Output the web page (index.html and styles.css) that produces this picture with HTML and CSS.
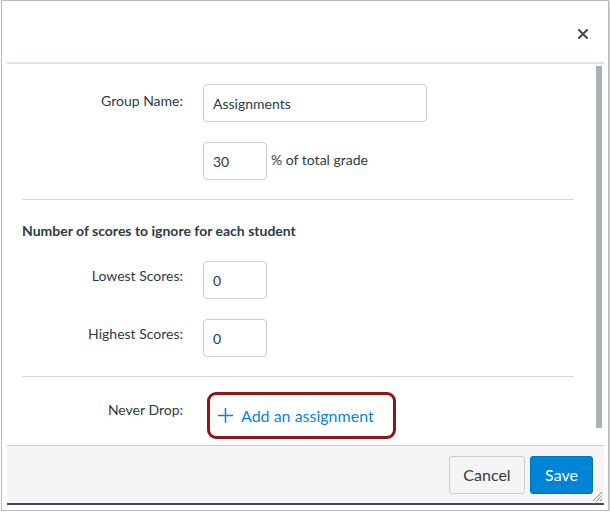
FILE: index.html
```html
<!DOCTYPE html>
<html lang="en">
<head>
<meta charset="utf-8">
<title>Edit Assignment Group</title>
<link rel="stylesheet" href="styles.css">
</head>
<body>
<div class="dialog">
  <div class="dialog-header">
    <button class="close" aria-label="Close">
      <svg width="10" height="10" viewBox="0 0 10 10"><path d="M1 1 L9 9 M9 1 L1 9" stroke="#4a4f54" stroke-width="2.2" stroke-linecap="square"/></svg>
    </button>
  </div>
  <div class="body-wrap">
    <div class="dialog-body">
      <div class="form-row">
        <label class="label">Group Name:</label>
        <input class="input input-wide" type="text" value="Assignments">
      </div>
      <div class="form-row">
        <span class="label"></span>
        <input class="input input-small" type="text" value="30">
        <span class="suffix">% of total grade</span>
      </div>
      <hr class="sep">
      <h3 class="heading">Number of scores to ignore for each student</h3>
      <div class="form-row">
        <label class="label tight">Lowest Scores:</label>
        <input class="input input-small" type="text" value="0">
      </div>
      <div class="form-row">
        <label class="label tight">Highest Scores:</label>
        <input class="input input-small" type="text" value="0">
      </div>
      <hr class="sep sep-last">
      <div class="form-row row-drop">
        <span class="label loose">Never Drop:</span>
        <a class="add-link" href="#">
          <svg width="15" height="15" viewBox="0 0 15 15"><path d="M7.5 0 V15 M0 7.5 H15" stroke="#0b84d6" stroke-width="1.5"/></svg>
          <span>Add an assignment</span>
        </a>
      </div>
    </div>
    <div class="scroll-thumb"></div>
  </div>
  <div class="dialog-footer">
    <button class="btn btn-cancel">Cancel</button>
    <button class="btn btn-save">Save</button>
    <span class="grip">
      <svg width="11" height="11" viewBox="0 0 11 11"><path d="M10 1 L1 10 M10 4.5 L4.5 10 M10 8 L8 10" stroke="#7d8389" stroke-width="1"/></svg>
    </span>
  </div>
</div>
</body>
</html>
```

FILE: styles.css
```css
html, body {
  margin: 0;
  padding: 0;
  background: #ffffff;
}

body {
  font-family: Lato, "Liberation Sans", sans-serif;
  color: #2d3b45;
  font-size: 14px;
}

.dialog {
  box-sizing: border-box;
  margin-left: 1px;
  width: 608px;
  height: 511px;
  border: 1px solid #b9bcbf;
  box-shadow: 1px 1px 2px rgba(0, 0, 0, 0.25);
  background: #ffffff;
  padding: 0 4px 5px 5px;
  display: flex;
  flex-direction: column;
}

.dialog-header {
  flex: none;
  border-bottom: 2px solid #dde2e5;
  display: flex;
  justify-content: flex-end;
  align-items: center;
  padding: 5px 16px 0 0;
  height: 56px;
}

.close {
  border: 0;
  background: none;
  padding: 0;
  margin: 0;
  width: 10px;
  height: 10px;
  display: block;
  cursor: pointer;
}

.close svg {
  display: block;
}

.body-wrap {
  position: relative;
  flex: none;
  height: 381px;
}

.dialog-body {
  height: 100%;
  overflow: hidden;
  box-sizing: border-box;
  padding: 20px 30px 23px 15px;
}

.scroll-thumb {
  position: absolute;
  right: 2px;
  top: 2px;
  width: 6px;
  height: 362px;
  background: #a9b2b9;
}

.form-row {
  display: flex;
  align-items: flex-start;
  margin-bottom: 20px;
}

.form-row:last-child {
  margin-bottom: 0;
}

.label {
  flex: none;
  width: 161px;
  text-align: right;
  padding-top: 7px;
  padding-right: 20px;
  line-height: 20px;
  font-size: 14px;
  color: #2d3b45;
}

.label.tight {
  padding-top: 5px;
}

.label.loose {
  padding-top: 8px;
}

.input {
  box-sizing: border-box;
  height: 38px;
  border: 1px solid #c7cdd1;
  border-radius: 4px;
  padding: 0 9px;
  font-family: Lato, "Liberation Sans", sans-serif;
  font-size: 14px;
  color: #2d3b45;
  background: #ffffff;
  margin: 0;
}

.input-wide {
  width: 224px;
}

.input-small {
  width: 64px;
}

.suffix {
  padding-left: 4px;
  line-height: 36px;
  font-size: 14px;
}

.sep {
  border: 0;
  border-top: 1px solid #d6dadd;
  margin: -1px 0 21px 0;
  height: 0;
}

.sep-last {
  margin-bottom: 15px;
}

.heading {
  margin: 0 0 20px 0;
  font-size: 14px;
  line-height: 20px;
  font-weight: 700;
  color: #2d3b45;
}

.add-link {
  box-sizing: border-box;
  margin-left: 4px;
  height: 47px;
  border: 3px solid #8f1518;
  border-radius: 9px;
  display: flex;
  align-items: center;
  gap: 8px;
  padding: 0 19px 0 8px;
  text-decoration: none;
  color: #0b84d6;
  font-size: 16px;
}

.add-link svg {
  display: block;
  flex: none;
}

.dialog-footer {
  position: relative;
  flex: none;
  box-sizing: border-box;
  height: 60px;
  background: #f5f5f5;
  border-top: 1px solid #c7cdd1;
  border-bottom: 2px solid #3d4c58;
  display: flex;
  justify-content: flex-end;
  align-items: center;
  gap: 5px;
  padding: 0 11px 0 0;
}

.btn {
  box-sizing: border-box;
  height: 38px;
  border-radius: 3px;
  font-family: Lato, "Liberation Sans", sans-serif;
  font-size: 16px;
  padding: 0 12px;
  margin: 0;
  cursor: pointer;
}

.btn-cancel {
  width: 76px;
  background: #f5f5f5;
  border: 1px solid #c7cdd1;
  color: #2d3b45;
}

.btn-save {
  width: 63px;
  background: #0084d6;
  border: 1px solid #0374b5;
  color: #ffffff;
}

.grip {
  position: absolute;
  right: 1px;
  bottom: 1px;
  width: 11px;
  height: 11px;
}

.grip svg {
  display: block;
}
```
